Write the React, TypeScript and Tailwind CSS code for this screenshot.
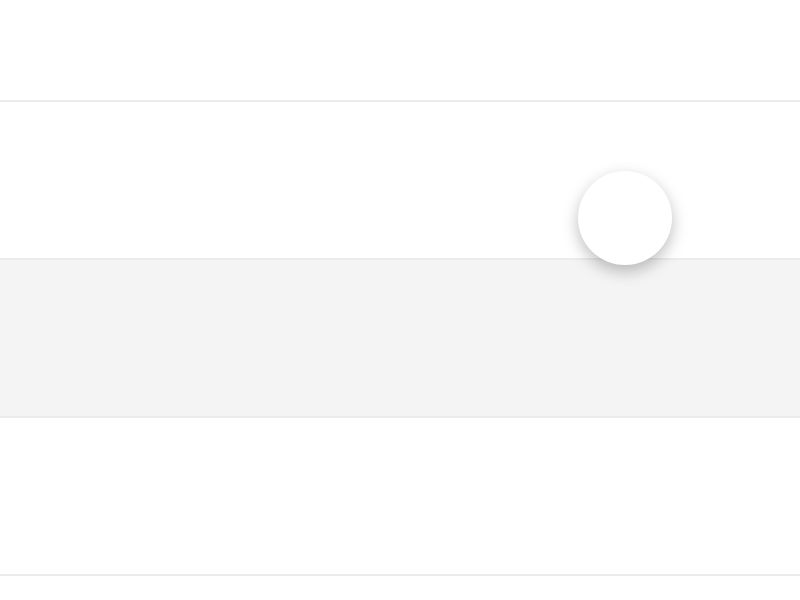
export default function App() {
  const rows = ["bg-white", "bg-[#f4f4f4]", "bg-white"];

  return (
    <div className="relative w-[800px] h-[600px] overflow-hidden bg-white">
      <div className="h-[100px]" />
      {rows.map((bg, i) => (
        <div key={i} className={`h-[158px] border-t-2 border-[#ececec] ${bg}`} />
      ))}
      <div className="border-t-2 border-[#ececec]" />

      {/* floating knob */}
      <div className="absolute left-[578px] top-[171px] w-[94px] h-[94px] rounded-full bg-white shadow-[0_6px_16px_rgba(0,0,0,0.26)]" />
    </div>
  );
}
